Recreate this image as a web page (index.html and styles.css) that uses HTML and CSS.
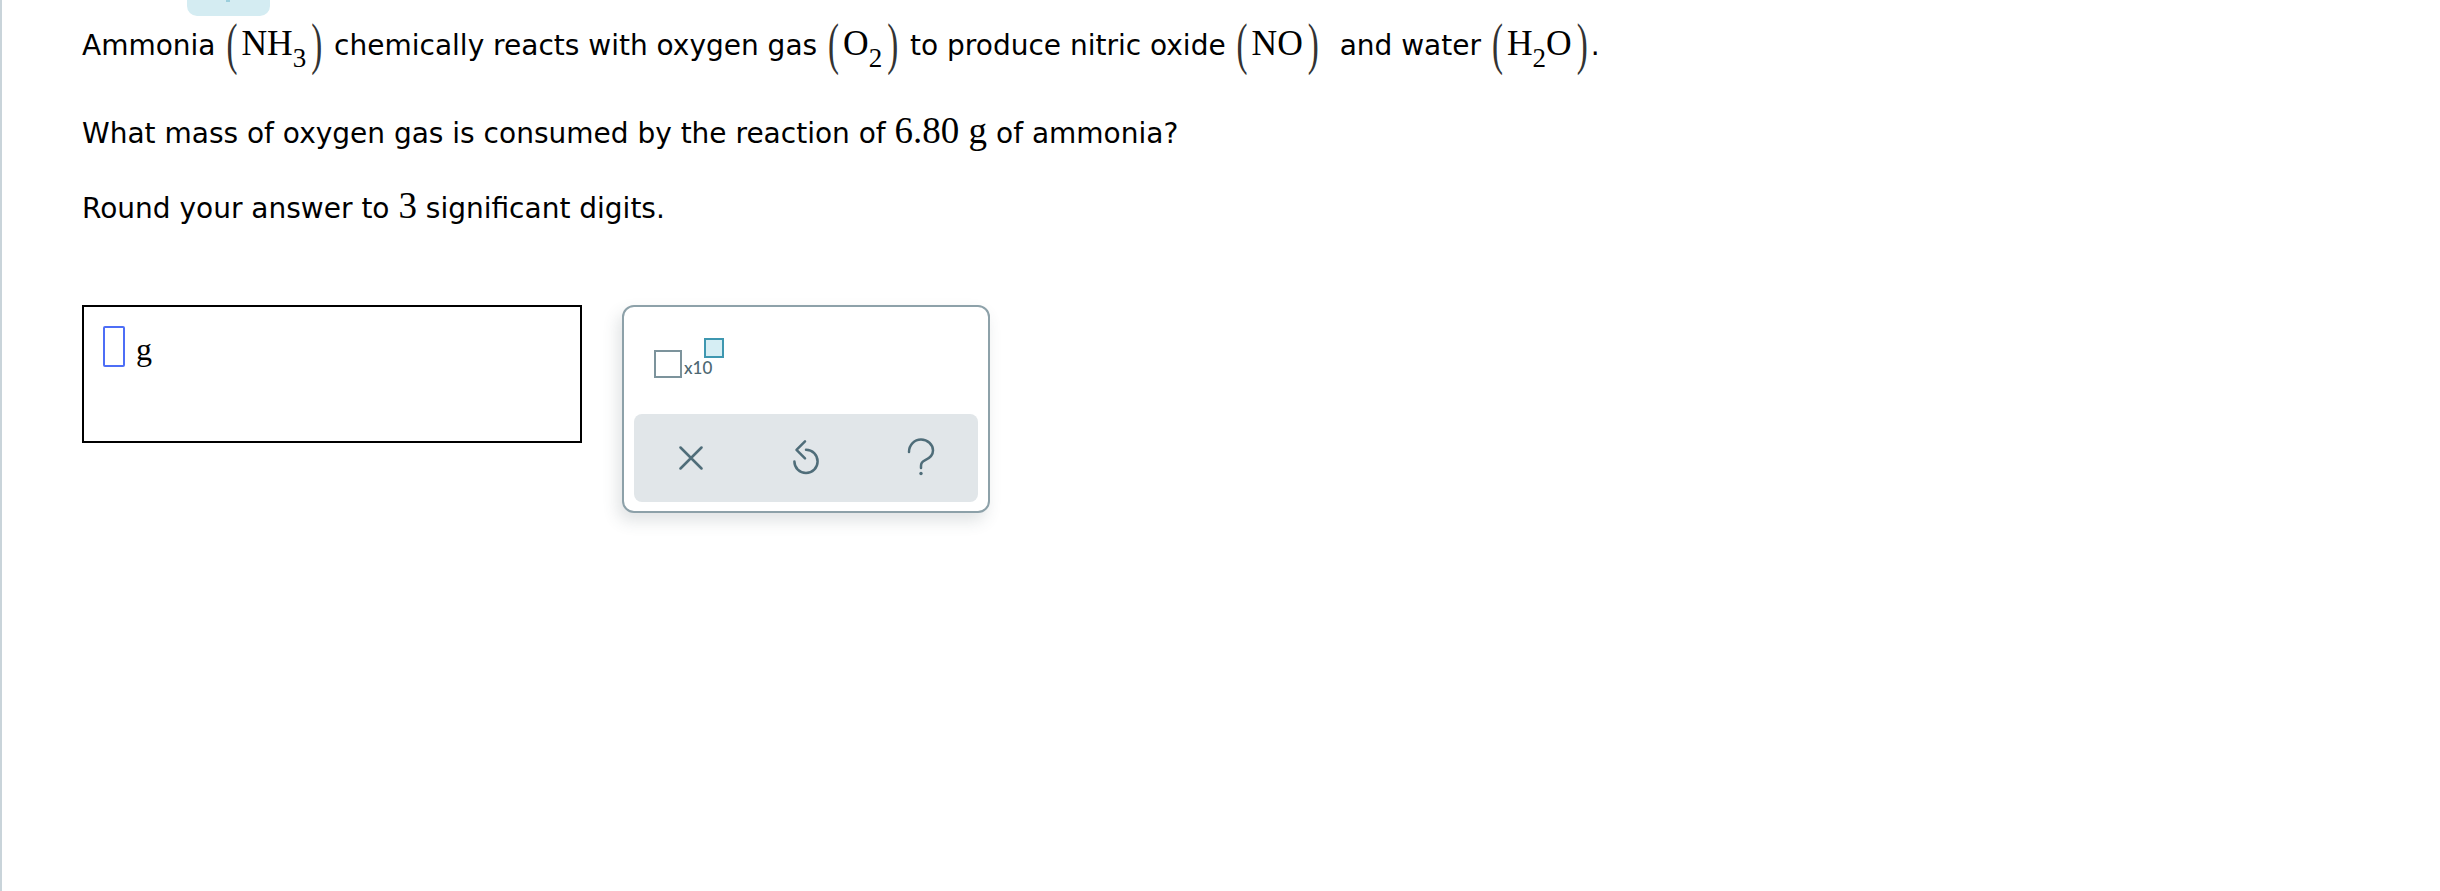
FILE: index.html
```html
<!DOCTYPE html>
<html>
<head>
<meta charset="utf-8">
<link rel="stylesheet" href="styles.css">
</head>
<body>
<div class="page">
  <div class="tab"></div>
  <div class="content">
    <p class="q line1">Ammonia <span class="m"><span class="paren l">(</span>NH<sub>3</sub><span class="paren r">)</span></span> chemically reacts with oxygen gas <span class="m"><span class="paren l">(</span>O<sub>2</sub><span class="paren r">)</span></span> to produce nitric oxide <span class="m"><span class="paren l">(</span>NO<span class="paren r">)</span></span>&nbsp; and water <span class="m"><span class="paren l">(</span>H<sub>2</sub>O<span class="paren r">)</span></span>.</p>
    <p class="q line2">What mass of oxygen gas is consumed by the reaction of <span class="m big">6.80 g</span> of ammonia?</p>
    <p class="q line3">Round your answer to <span class="m big">3</span> significant digits.</p>
    <div class="answer-row">
      <div class="answer-box">
        <span class="cursor"></span>
        <span class="unit">g</span>
      </div>
      <div class="panel">
        <div class="panel-top">
          <div class="sci">
            <span class="sq"></span>
            <span class="x10">x10</span>
            <span class="sup"></span>
          </div>
        </div>
        <div class="bar">
          <div class="btn">
            <svg width="24" height="24" viewBox="0 0 24 24"><path d="M1.5 1.5 L22.5 22.5 M22.5 1.5 L1.5 22.5" fill="none" stroke="#4f6d79" stroke-width="2.5" stroke-linecap="round"/></svg>
          </div>
          <div class="btn">
            <svg width="32" height="40" viewBox="0 0 32 40"><path d="M4.4 23.4 A11.6 11.6 0 1 0 16 11.8 M15 3.3 L6.5 11.8 L15 20.3" fill="none" stroke="#4f6d79" stroke-width="2.5" stroke-linecap="round" stroke-linejoin="round"/></svg>
          </div>
          <div class="btn">
            <svg width="30" height="40" viewBox="0 0 30 40"><path d="M3 14 C3 6.8 8.4 1.5 15 1.5 C21.6 1.5 27 6.4 27 12.5 C27 18 22.5 20.8 18.8 22.4 C16.2 23.6 15 25.2 15 28 L15 30" fill="none" stroke="#4f6d79" stroke-width="2.5" stroke-linecap="round"/><circle cx="15" cy="35.5" r="1.7" fill="#4f6d79"/></svg>
          </div>
        </div>
      </div>
    </div>
  </div>
</div>
</body>
</html>
```
FILE: styles.css
```css
html, body {
  margin: 0;
  padding: 0;
  background: #fff;
}

.page {
  position: relative;
  min-height: 891px;
  box-sizing: border-box;
  border-left: 2px solid #c9d4da;
}

.tab {
  position: absolute;
  top: 0;
  left: 185px;
  width: 83px;
  height: 16px;
  background: #d4ecf2;
  border-radius: 0 0 10px 10px;
}

.tab::after {
  content: "";
  position: absolute;
  top: 0;
  left: 39px;
  width: 4px;
  height: 2px;
  background: #9ccfdd;
}

.content {
  padding: 22px 0 0 80px;
}

.q {
  margin: 0;
  font-family: "DejaVu Sans", Verdana, sans-serif;
  font-size: 28px;
  line-height: 48px;
  color: #000;
  white-space: nowrap;
}

.line2 { margin-top: 40px; }
.line3 { margin-top: 27px; }

.m {
  font-family: "Liberation Serif", "Times New Roman", serif;
  font-size: 35.5px;
  line-height: 0;
}

.m.big {
  font-size: 37px;
}

.m sub {
  font-size: 27px;
  line-height: 0;
  vertical-align: -12px;
}

.paren {
  display: inline-block;
  font-size: 33px;
  line-height: 1;
  color: #333;
  transform: scaleY(1.72);
}

.paren.l { margin: 0 4px 0 2px; }
.paren.r { margin: 0 3px 0 5px; }

.answer-row {
  display: flex;
  align-items: flex-start;
  gap: 40px;
  margin-top: 72px;
}

.answer-box {
  width: 500px;
  height: 138px;
  box-sizing: border-box;
  border: 2px solid #000;
  padding: 19px;
  display: flex;
  align-items: flex-start;
  gap: 11px;
}

.cursor {
  width: 22px;
  height: 41px;
  box-sizing: border-box;
  border: 2px solid #4d6ef6;
  border-radius: 2px;
}

.unit {
  font-family: "Liberation Serif", "Times New Roman", serif;
  font-size: 32px;
  line-height: 41px;
  margin-top: 3px;
  color: #000;
}

.panel {
  width: 368px;
  height: 208px;
  box-sizing: border-box;
  border: 2px solid #8da1a9;
  border-radius: 12px;
  padding: 0 10px 9px;
  background: #fff;
  box-shadow: -4px 8px 16px rgba(60, 80, 90, 0.16);
}

.panel-top {
  height: 107px;
  box-sizing: border-box;
  padding: 31px 0 0 20px;
}

.sci {
  display: flex;
  align-items: flex-end;
  height: 40px;
}

.sq {
  width: 28px;
  height: 28px;
  box-sizing: border-box;
  border: 2px solid #7c939c;
}

.x10 {
  font-family: Lato, "Open Sans", sans-serif;
  font-size: 17px;
  font-weight: 500;
  line-height: 1;
  color: #4d6772;
  margin: 0 0 2px 2px;
}

.sup {
  align-self: flex-start;
  width: 20px;
  height: 20px;
  box-sizing: border-box;
  border: 2px solid #3e97b0;
  background: #d6eef4;
  margin-left: -8px;
}

.bar {
  height: 88px;
  background: #e1e6e9;
  border-radius: 8px;
  display: flex;
}

.btn {
  flex: 1;
  display: flex;
  align-items: center;
  justify-content: center;
}

.btn svg {
  display: block;
}
```
